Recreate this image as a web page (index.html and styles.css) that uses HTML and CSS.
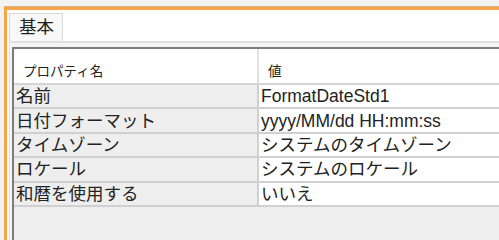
FILE: index.html
```html
<!DOCTYPE html>
<html lang="ja">
<head>
<meta charset="utf-8">
<title>プロパティ</title>
<link rel="stylesheet" href="styles.css">
</head>
<body>
<div class="frame">
  <div class="tabs">
    <div class="tab">基本</div>
  </div>
  <div class="panel">
    <div class="scroll">
      <table class="props">
        <thead>
          <tr><th class="c-name">プロパティ名</th><th class="c-val">値</th></tr>
        </thead>
        <tbody>
          <tr><td class="c-name">名前</td><td class="c-val">FormatDateStd1</td></tr>
          <tr><td class="c-name">日付フォーマット</td><td class="c-val">yyyy/MM/dd HH:mm:ss</td></tr>
          <tr><td class="c-name">タイムゾーン</td><td class="c-val">システムのタイムゾーン</td></tr>
          <tr><td class="c-name">ロケール</td><td class="c-val">システムのロケール</td></tr>
          <tr><td class="c-name">和暦を使用する</td><td class="c-val">いいえ</td></tr>
        </tbody>
      </table>
    </div>
  </div>
</div>
</body>
</html>
```
FILE: styles.css
```css
html, body {
  margin: 0;
  padding: 0;
  overflow: hidden;
}
body {
  height: 100vh;
  box-sizing: border-box;
  padding-top: 6px;
  display: flex;
  flex-direction: column;
  background: #f3f3f3;
  font-family: "Liberation Sans", "Noto Sans CJK JP", sans-serif;
  color: #222;
}
.frame {
  flex: 1;
  min-height: 0;
  margin-left: 4px;
  border-top: 1px solid #d6b48c;
  box-shadow: inset 0 3px 0 #f8a54a;
  border-left: 3px solid #f8a54a;
  padding: 6px 0 0 2px;
  background: #ffffff;
  display: flex;
  flex-direction: column;
}
.tabs {
  display: flex;
  height: 28px;
}
.tab {
  width: 54px;
  border: 1px solid #dadada;
  border-bottom: none;
  background: #f8f8f8;
  font-size: 17.5px;
  line-height: 27px;
  padding-left: 9px;
  box-sizing: border-box;
}
.panel {
  flex: 1;
  min-height: 0;
  border-top: 2px solid #dfdfdf;
  border-left: 1px solid #e2e2e2;
  background: #f4f4f4;
  padding: 4px 0 0 2px;
  display: flex;
  flex-direction: column;
}
.scroll {
  flex: 1;
  min-height: 0;
  overflow: hidden;
  border-top: 2px solid #7c7c7c;
  border-left: 2px solid #7c7c7c;
  background: #eeeeee;
}
.props {
  width: 100%;
  border-collapse: collapse;
  table-layout: fixed;
}
.props th {
  background: #ffffff;
  font-weight: normal;
  font-size: 13.5px;
  line-height: 16px;
  text-align: left;
  padding: 15px 0 3px 9px;
  border-bottom: 2px solid #d4d4d4;
}
.props th.c-name {
  width: 234px;
  border-right: 2px solid #e2e2e2;
}
.props td {
  font-size: 17.5px;
  line-height: 22px;
  height: 22.4px;
  padding: 0 0 0 2px;
  border-bottom: 2px solid #d0d0d0;
  white-space: nowrap;
  overflow: hidden;
}
.props td.c-name {
  background: #eeeeee;
  border-right: 2px solid #d0d0d0;
}
.props td.c-val {
  background: #ffffff;
}
```
